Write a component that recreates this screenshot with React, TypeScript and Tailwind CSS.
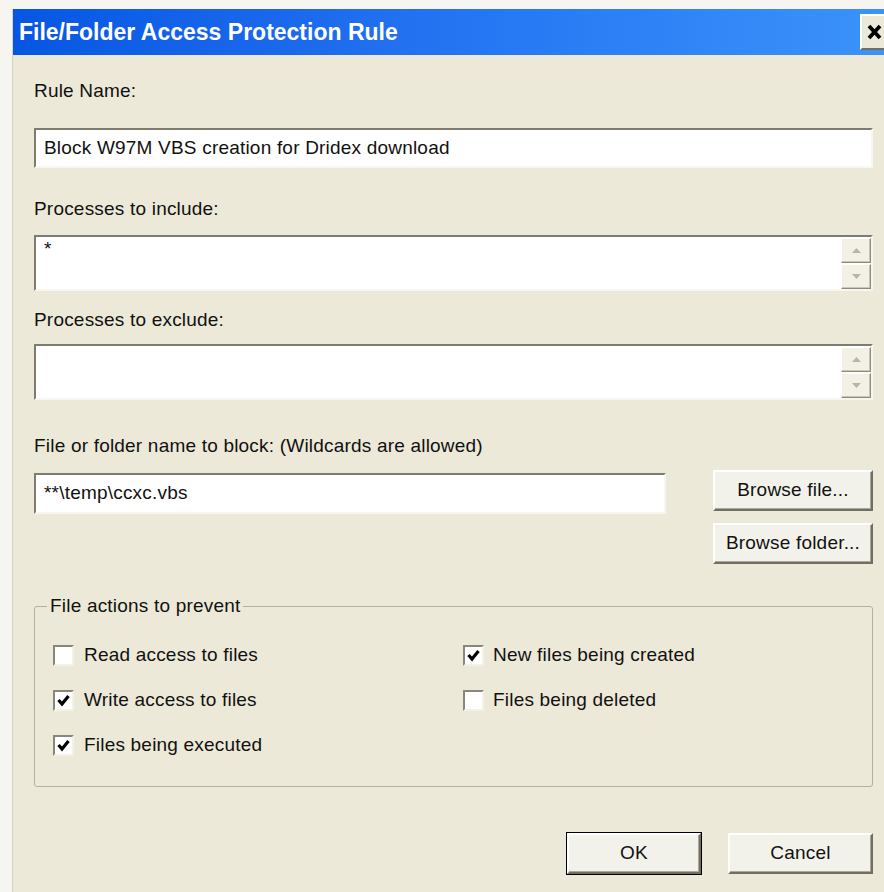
import React from 'react';

const sunken =
  'border-2 border-t-[#7f7c6f] border-l-[#7f7c6f] border-b-[#f7f6f0] border-r-[#f7f6f0] bg-white';
const raised =
  'border-2 border-t-white border-l-white border-b-[#716f64] border-r-[#716f64] shadow-[inset_-1px_-1px_0_#aca899] bg-[#f3f2ea]';
const txt = 'text-[19px] tracking-[0.2px] text-[#111]';

const Label: React.FC<{ text: string; className?: string }> = ({ text, className = '' }) => (
  <div className={`h-[22px] leading-[22px] ${txt} ${className}`}>{text}</div>
);

const Arrow: React.FC<{ up?: boolean }> = ({ up }) => (
  <svg width="9" height="5" viewBox="0 0 9 5">
    <path d={up ? 'M0 5 L4.5 0 L9 5 Z' : 'M0 0 L4.5 5 L9 0 Z'} fill="#b8b5a6" />
  </svg>
);

// multi-line list box with the little spin-style scroll buttons on the right
const ListBox: React.FC<{ value?: string; className?: string }> = ({ value = '', className = '' }) => (
  <div className={`flex h-[56px] ${sunken} ${className}`}>
    <div className={`flex-1 pl-[8px] pt-[1px] leading-[22px] ${txt}`}>{value}</div>
    <div className="flex w-[30px] flex-col gap-[1px] pt-[1px]">
      <div className="flex h-[25px] items-center justify-center border border-t-white border-l-white border-b-[#8e8b7b] border-r-[#8e8b7b] bg-[#f3f1e6] shadow-[inset_-1px_-1px_0_#c9c6b6]">
        <Arrow up />
      </div>
      <div className="flex h-[25px] items-center justify-center border border-t-white border-l-white border-b-[#8e8b7b] border-r-[#8e8b7b] bg-[#f3f1e6] shadow-[inset_-1px_-1px_0_#c9c6b6]">
        <Arrow />
      </div>
    </div>
  </div>
);

const CheckItem: React.FC<{ label: string; checked?: boolean; gap?: string }> = ({ label, checked, gap = 'gap-[10px]' }) => (
  <div className={`flex h-[22px] items-center ${gap}`}>
    <div className="flex h-[21px] w-[21px] items-center justify-center border-2 border-t-[#8a877a] border-l-[#8a877a] border-b-[#f4f2e8] border-r-[#f4f2e8] bg-white">
      {checked && (
        <svg width="13" height="13" viewBox="0 0 13 13">
          <path d="M1.5 6 L5 10 L11.5 2" fill="none" stroke="#000" strokeWidth="3.2" />
        </svg>
      )}
    </div>
    <span className={`leading-[22px] ${txt}`}>{label}</span>
  </div>
);

const Button: React.FC<{ text: string; className?: string }> = ({ text, className = '' }) => (
  <div className={`flex h-[41px] items-center justify-center ${txt} ${raised} ${className}`}>
    {text}
  </div>
);

export default function App() {
  return (
    <div className="h-[892px] w-[884px] overflow-hidden bg-[#f6f5f0] pl-[12px] pt-[9px] font-['Liberation_Sans',Arial,sans-serif]">
      <div className="flex h-full flex-col border-l border-[#d6d4c6]">
        {/* title bar */}
        <div className="flex h-[46px] items-center bg-linear-to-r from-[#0756e3] via-[#2474f2] to-[#3c92fa] pl-[6px]">
          <span className="text-[23px] font-bold text-white">File/Folder Access Protection Rule</span>
          <div className="ml-auto flex h-[36px] w-[24px] items-center justify-center border-2 border-r-0 border-t-white border-l-white border-b-[#716f64] bg-[#ece9d8] pl-[2px]">
            <svg width="15" height="16" viewBox="0 0 15 16">
              <path d="M2 2 L13 14 M13 2 L2 14" stroke="#000" strokeWidth="3.8" />
            </svg>
          </div>
        </div>

        {/* dialog body */}
        <div className="flex flex-1 flex-col bg-[#ece9d8] pl-[21px] pr-[11px]">
          <Label text="Rule Name:" className="mt-[25px]" />
          <div className={`mt-[26px] flex h-[40px] items-center pl-[8px] ${txt} ${sunken}`}>
            Block W97M VBS creation for Dridex download
          </div>

          <Label text="Processes to include:" className="mt-[30px]" />
          <ListBox value="*" className="mt-[15px]" />

          <Label text="Processes to exclude:" className="mt-[18px]" />
          <ListBox className="mt-[13px]" />

          <Label text="File or folder name to block: (Wildcards are allowed)" className="mt-[35px]" />
          <div className="mt-[13px] flex items-start">
            <div className={`mt-[3px] flex h-[41px] w-[632px] items-center pl-[8px] ${txt} ${sunken}`}>
              **\temp\ccxc.vbs
            </div>
            <div className="ml-auto flex w-[160px] flex-col gap-[12px]">
              <Button text="Browse file..." />
              <Button text="Browse folder..." />
            </div>
          </div>

          <fieldset className="mt-[31px] rounded-[3px] border border-[#b3b0a0] pb-[30px] pt-[27px]">
            <legend className={`ml-[12px] px-[3px] leading-[22px] ${txt}`}>File actions to prevent</legend>
            <div className="grid grid-cols-[410px_1fr] gap-y-[23px] pl-[18px]">
              <CheckItem label="Read access to files" />
              <CheckItem label="New files being created" checked gap="gap-[9px]" />
              <CheckItem label="Write access to files" checked />
              <CheckItem label="Files being deleted" gap="gap-[9px]" />
              <CheckItem label="Files being executed" checked />
            </div>
          </fieldset>

          <div className="mt-[45px] flex items-center justify-end gap-[26px]">
            <div className="border border-black">
              <Button text="OK" className="w-[134px] h-[39px]" />
            </div>
            <Button text="Cancel" className="w-[145px]" />
          </div>
        </div>
      </div>
    </div>
  );
}
